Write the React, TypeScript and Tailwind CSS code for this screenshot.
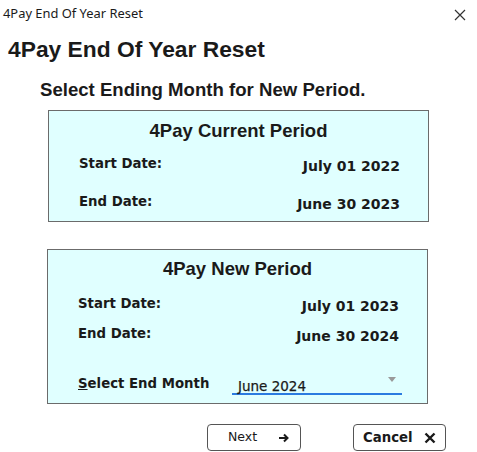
import { useState } from "react";

const arial = { fontFamily: '"Liberation Sans", Arial, sans-serif' };
const tahoma = { fontFamily: '"DejaVu Sans", Verdana, sans-serif' };

const DateRow = (props: { label: string; value: string; className?: string }) => {
  const { label, value, className } = props;
  return (
    <div className={`flex justify-between pl-[30px] pr-[28px] ${className || ""}`}>
      <div style={tahoma} className="text-[13.3px] leading-[16px] font-bold text-[#1a1a1a]">{label}</div>
      <div style={tahoma} className="text-[14px] leading-[16px] font-bold text-[#1a1a1a] pt-[2px]">{value}</div>
    </div>
  );
};

const App = () => {
  const [month] = useState("June 2024");

  return (
    <div className="w-[477px] h-[452px] bg-white relative overflow-hidden">
      {/* caption */}
      <div className="h-[28px] flex items-start justify-between">
        <div style={{ fontFamily: '"Noto Sans", sans-serif' }} className="text-[12.9px] leading-none pl-[3px] pt-[7px] text-[#1a1a1a]">
          4Pay End Of Year Reset
        </div>
        <svg width="12" height="12" viewBox="0 0 12 12" className="mt-[9px] mr-[11px]">
          <path d="M1 1 L11 11 M11 1 L1 11" stroke="#333" strokeWidth="1.2" />
        </svg>
      </div>

      <div style={arial} className="pl-[8px] mt-[8px] text-[22.8px] font-bold leading-[26px] text-[#1a1a1a]">
        4Pay End Of Year Reset
      </div>
      <div style={arial} className="pl-[40px] mt-[17px] text-[18.6px] font-bold leading-[22px] text-[#1a1a1a]">
        Select Ending Month for New Period.
      </div>

      {/* current period */}
      <div className="ml-[48px] mt-[9px] w-[381px] h-[112px] bg-[#e0ffff] border-[1.5px] border-[#6b6b6b]">
        <div style={arial} className="text-center text-[18.5px] font-bold leading-[22px] mt-[9px] text-[#1a1a1a]">
          4Pay Current Period
        </div>
        <DateRow label="Start Date:" value="July 01 2022" className="mt-[14px]" />
        <DateRow label="End Date:" value="June 30 2023" className="mt-[20px]" />
      </div>

      {/* new period */}
      <div className="ml-[47px] mt-[27px] w-[381px] h-[155px] bg-[#e0ffff] border-[1.5px] border-[#6b6b6b]">
        <div style={arial} className="text-center text-[18.5px] font-bold leading-[22px] mt-[8px] text-[#1a1a1a]">
          4Pay New Period
        </div>
        <DateRow label="Start Date:" value="July 01 2023" className="mt-[16px]" />
        <DateRow label="End Date:" value="June 30 2024" className="mt-[12px]" />
        <div className="flex items-center pl-[30px] mt-[29px]">
          <div style={tahoma} className="text-[13.3px] leading-[16px] font-bold text-[#1a1a1a] w-[154px]">
            <span className="underline">S</span>elect End Month
          </div>
          <div className="w-[170px] h-[22px] border-b-2 border-[#2b7be0] flex items-end justify-between pr-[6px]">
            <span style={tahoma} className="text-[13.5px] leading-[14px] pl-[6px] text-[#1a1a1a] [-webkit-text-stroke:0.25px_#1a1a1a]">{month}</span>
            <svg width="8" height="5" viewBox="0 0 8 5" className="mb-[11px]">
              <path d="M0 0 L8 0 L4 5 Z" fill="#9a9a9a" />
            </svg>
          </div>
        </div>
      </div>

      {/* buttons */}
      <div className="flex mt-[20px] pl-[207px] gap-[52px]">
        <button className="w-[94px] h-[27px] border border-[#555] rounded-[4px] bg-white flex items-center justify-between pl-[20px] pr-[10px]">
          <span style={tahoma} className="text-[12.5px] text-[#1a1a1a]">Next</span>
          <svg width="12" height="10" viewBox="0 0 12 10">
            <path d="M1 5 H9 M6 1.5 L9.5 5 L6 8.5" stroke="#1a1a1a" strokeWidth="2" fill="none" />
          </svg>
        </button>
        <button className="w-[93px] h-[27px] border border-[#555] rounded-[4px] bg-white flex items-center justify-between pl-[9px] pr-[9px]">
          <span style={tahoma} className="text-[13.3px] font-bold text-[#1a1a1a]">Cancel</span>
          <svg width="12" height="12" viewBox="0 0 12 12">
            <path d="M1.5 1.5 L10.5 10.5 M10.5 1.5 L1.5 10.5" stroke="#1a1a1a" strokeWidth="2.4" />
          </svg>
        </button>
      </div>
    </div>
  );
};

export default App;
